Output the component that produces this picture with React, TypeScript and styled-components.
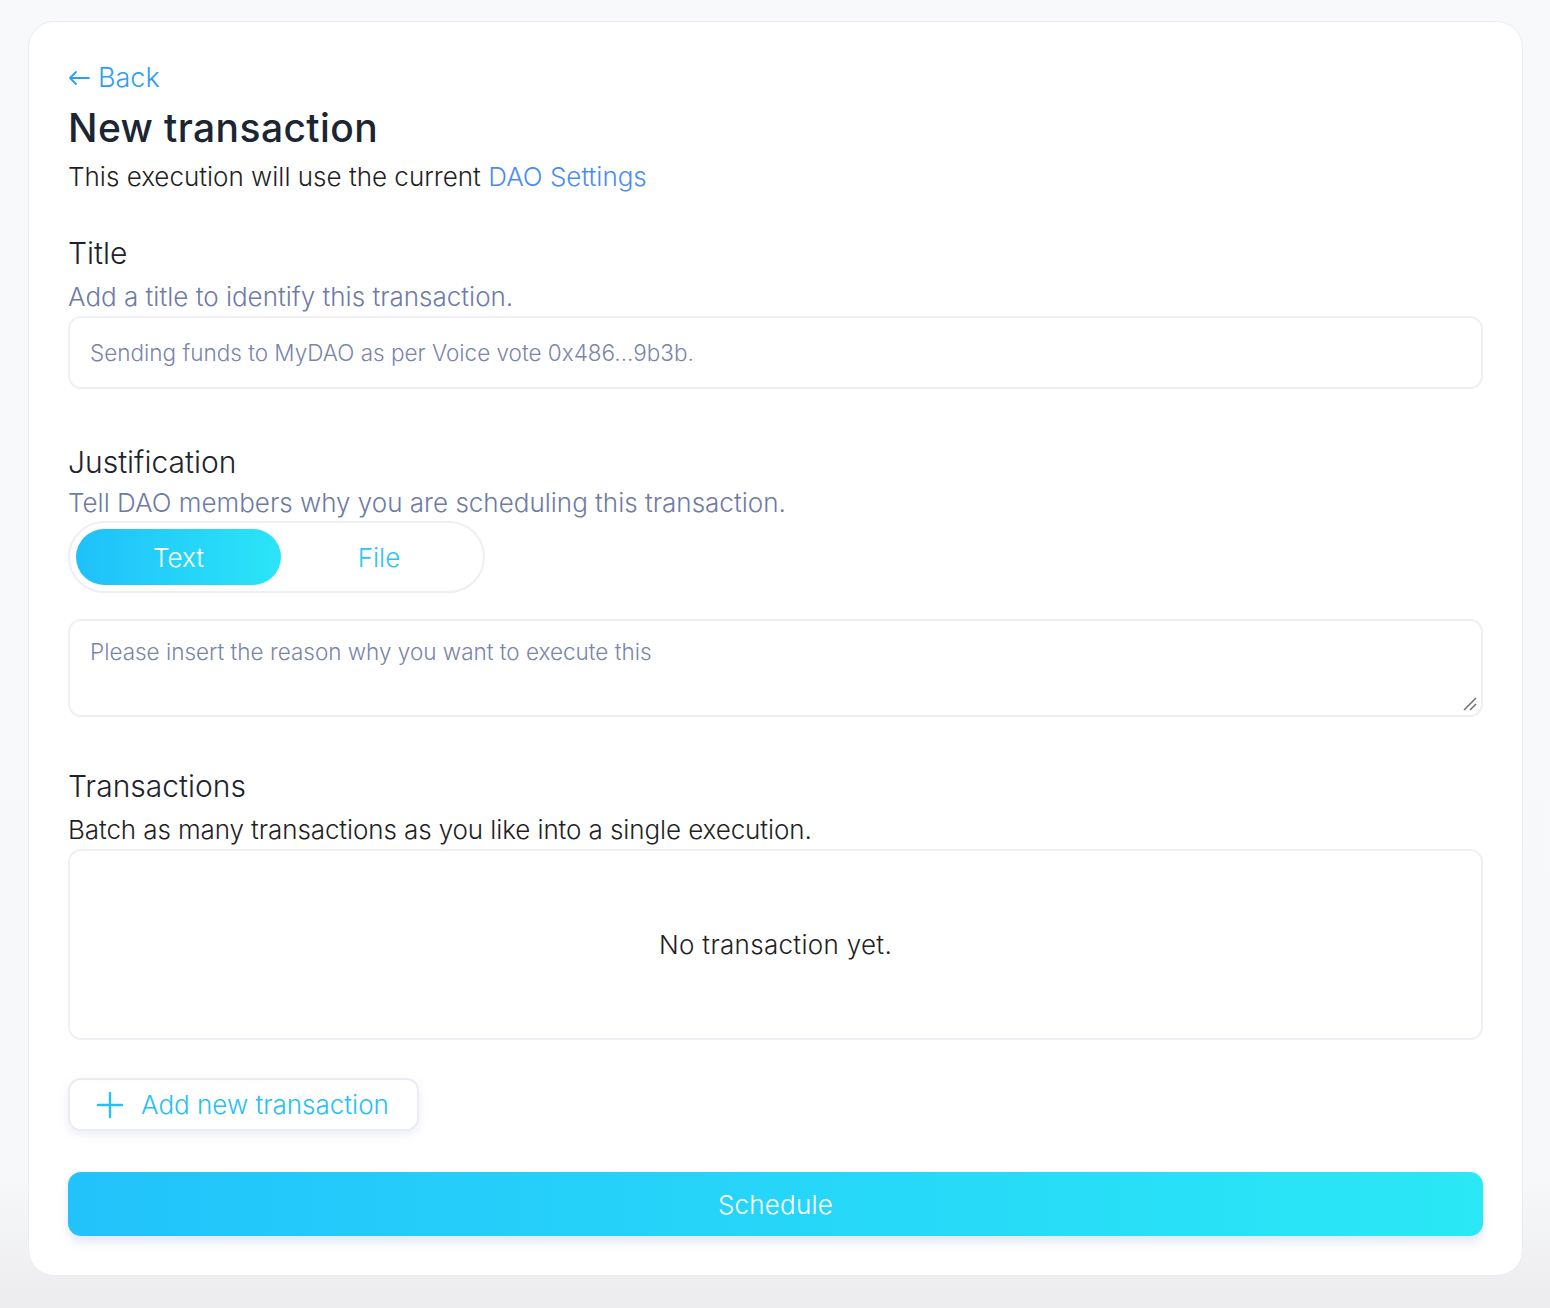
import React from "react";
import styled, { createGlobalStyle } from "styled-components";

const Global = createGlobalStyle`
  html, body { margin: 0; padding: 0; }
  body {
    background: linear-gradient(180deg, #f8f9fb 0%, #f7f8fa 90%, #ececef 100%);
    min-height: 1308px;
    font-family: Inter, "Open Sans", sans-serif;
    font-weight: 300;
    color: #1f1f24;
  }
  * { box-sizing: border-box; }
`;

const Page = styled.div`
  padding: 21px 27px 32px 28px;
`;

const Card = styled.div`
  background: #fff;
  border: 1px solid #ebebf2;
  border-radius: 26px;
  padding: 40px 39px 39px 39px;
  display: flex;
  flex-direction: column;
`;

const BackLink = styled.a`
  color: #2a9ff4;
  font-size: 27px;
  font-weight: 300;
  text-decoration: none;
  line-height: 32px;
  display: inline-flex;
  align-items: center;
  gap: 8px;
  align-self: flex-start;
`;

const Heading = styled.h1`
  margin: 10px 0 0;
  font-size: 39px;
  font-weight: 500;
  color: #1c2532;
  letter-spacing: 0.4px;
  line-height: 48px;
`;

const Sub = styled.p`
  margin: 9px 0 0;
  font-size: 26px;
  line-height: 32px;
  color: #1f1f24;
`;

const Link = styled.a`
  color: #4a8cf6;
  text-decoration: none;
`;

const Section = styled.section<{ $top: number }>`
  margin-top: ${(p) => p.$top}px;
  display: flex;
  flex-direction: column;
`;

const Label = styled.h2`
  margin: 0;
  font-size: 30px;
  font-weight: 300;
  line-height: 36px;
  color: #1e232b;
`;

const Desc = styled.p<{ $dark?: boolean; $gap?: number }>`
  margin: ${(p) => p.$gap ?? 10}px 0 0;
  font-size: 26px;
  line-height: 32px;
  letter-spacing: ${(p) => (p.$dark ? "-0.1px" : "0")};
  color: ${(p) => (p.$dark ? "#1f1f24" : "#6f7ba6")};
`;

const Field = styled.div<{ $h: number; $top: number }>`
  margin-top: ${(p) => p.$top}px;
  height: ${(p) => p.$h}px;
  border: 2px solid #efeff5;
  border-radius: 13px;
  padding: 0 20px;
  display: flex;
  align-items: center;
  position: relative;
`;

const Placeholder = styled.span`
  font-size: 22.5px;
  color: #7a85ab;
`;

const TextArea = styled.div`
  margin-top: 26px;
  height: 98px;
  border: 2px solid #efeff5;
  border-radius: 13px;
  padding: 17px 20px;
  position: relative;
`;

const Grip = styled.svg`
  position: absolute;
  right: 4px;
  bottom: 4px;
`;

const Toggle = styled.div`
  margin-top: 2px;
  width: 417px;
  height: 72px;
  border: 2px solid #eeeef5;
  border-radius: 36px;
  padding: 6px;
  display: grid;
  grid-template-columns: 205px 1fr;
`;

const ToggleItem = styled.button<{ $active?: boolean }>`
  border: none;
  border-radius: 28px;
  font-family: inherit;
  font-weight: 300;
  font-size: 26px;
  cursor: pointer;
  background: ${(p) =>
    p.$active ? "linear-gradient(90deg, #1fc0fa 0%, #2be5f7 100%)" : "transparent"};
  color: ${(p) => (p.$active ? "#ffffff" : "#2ac6f6")};
`;

const EmptyBox = styled.div`
  margin-top: 3px;
  height: 191px;
  border: 2px solid #efeff5;
  border-radius: 13px;
  display: flex;
  align-items: center;
  justify-content: center;
  font-size: 26px;
  letter-spacing: 0.3px;
  color: #1f1f24;
`;

const AddButton = styled.button`
  margin-top: 38px;
  align-self: flex-start;
  width: 351px;
  height: 53px;
  border: 2px solid #ececf5;
  border-radius: 13px;
  background: #fff;
  box-shadow: 0 3px 8px rgba(170, 180, 220, 0.25);
  display: flex;
  align-items: center;
  gap: 17px;
  padding: 0 0 0 26px;
  white-space: nowrap;
  font-family: inherit;
  font-weight: 300;
  font-size: 26px;
  color: #27c0f5;
  cursor: pointer;
`;

const ScheduleButton = styled.button`
  margin-top: 41px;
  height: 64px;
  border: none;
  border-radius: 13px;
  background: linear-gradient(90deg, #22c3fb 0%, #2ae8f6 100%);
  box-shadow: 0 6px 10px rgba(160, 180, 230, 0.3);
  color: #fff;
  font-family: inherit;
  font-weight: 300;
  font-size: 26px;
  letter-spacing: 0.2px;
  cursor: pointer;
`;

export default function App() {
  return (
    <>
      <Global />
      <Page>
        <Card>
          <BackLink href="#">
            <svg width="22" height="16" viewBox="0 0 22 16" fill="none">
              <path d="M21 8H2M8 2L2 8l6 6" stroke="#2a9ff4" strokeWidth="1.8" strokeLinecap="round" strokeLinejoin="round" />
            </svg>
            Back
          </BackLink>
          <Heading>New transaction</Heading>
          <Sub>
            This execution will use the current <Link href="#">DAO Settings</Link>
          </Sub>

          <Section $top={42}>
            <Label>Title</Label>
            <Desc>Add a title to identify this transaction.</Desc>
            <Field $h={73} $top={3}>
              <Placeholder>Sending funds to MyDAO as per Voice vote 0x486...9b3b.</Placeholder>
            </Field>
          </Section>

          <Section $top={55}>
            <Label>Justification</Label>
            <Desc $gap={7}>Tell DAO members why you are scheduling this transaction.</Desc>
            <Toggle>
              <ToggleItem $active>Text</ToggleItem>
              <ToggleItem>File</ToggleItem>
            </Toggle>
            <TextArea>
              <Placeholder>Please insert the reason why you want to execute this</Placeholder>
              <Grip width="14" height="14" viewBox="0 0 14 14">
                <path d="M1 13L13 1M7 13L13 7" stroke="#666" strokeWidth="1.4" />
              </Grip>
            </TextArea>
          </Section>

          <Section $top={51}>
            <Label>Transactions</Label>
            <Desc $dark>Batch as many transactions as you like into a single execution.</Desc>
            <EmptyBox>No transaction yet.</EmptyBox>
          </Section>

          <AddButton>
            <svg width="28" height="28" viewBox="0 0 28 28" fill="none">
              <path d="M14 2v24M2 14h24" stroke="#27c0f5" strokeWidth="2.4" strokeLinecap="round" />
            </svg>
            Add new transaction
          </AddButton>

          <ScheduleButton>Schedule</ScheduleButton>
        </Card>
      </Page>
    </>
  );
}
